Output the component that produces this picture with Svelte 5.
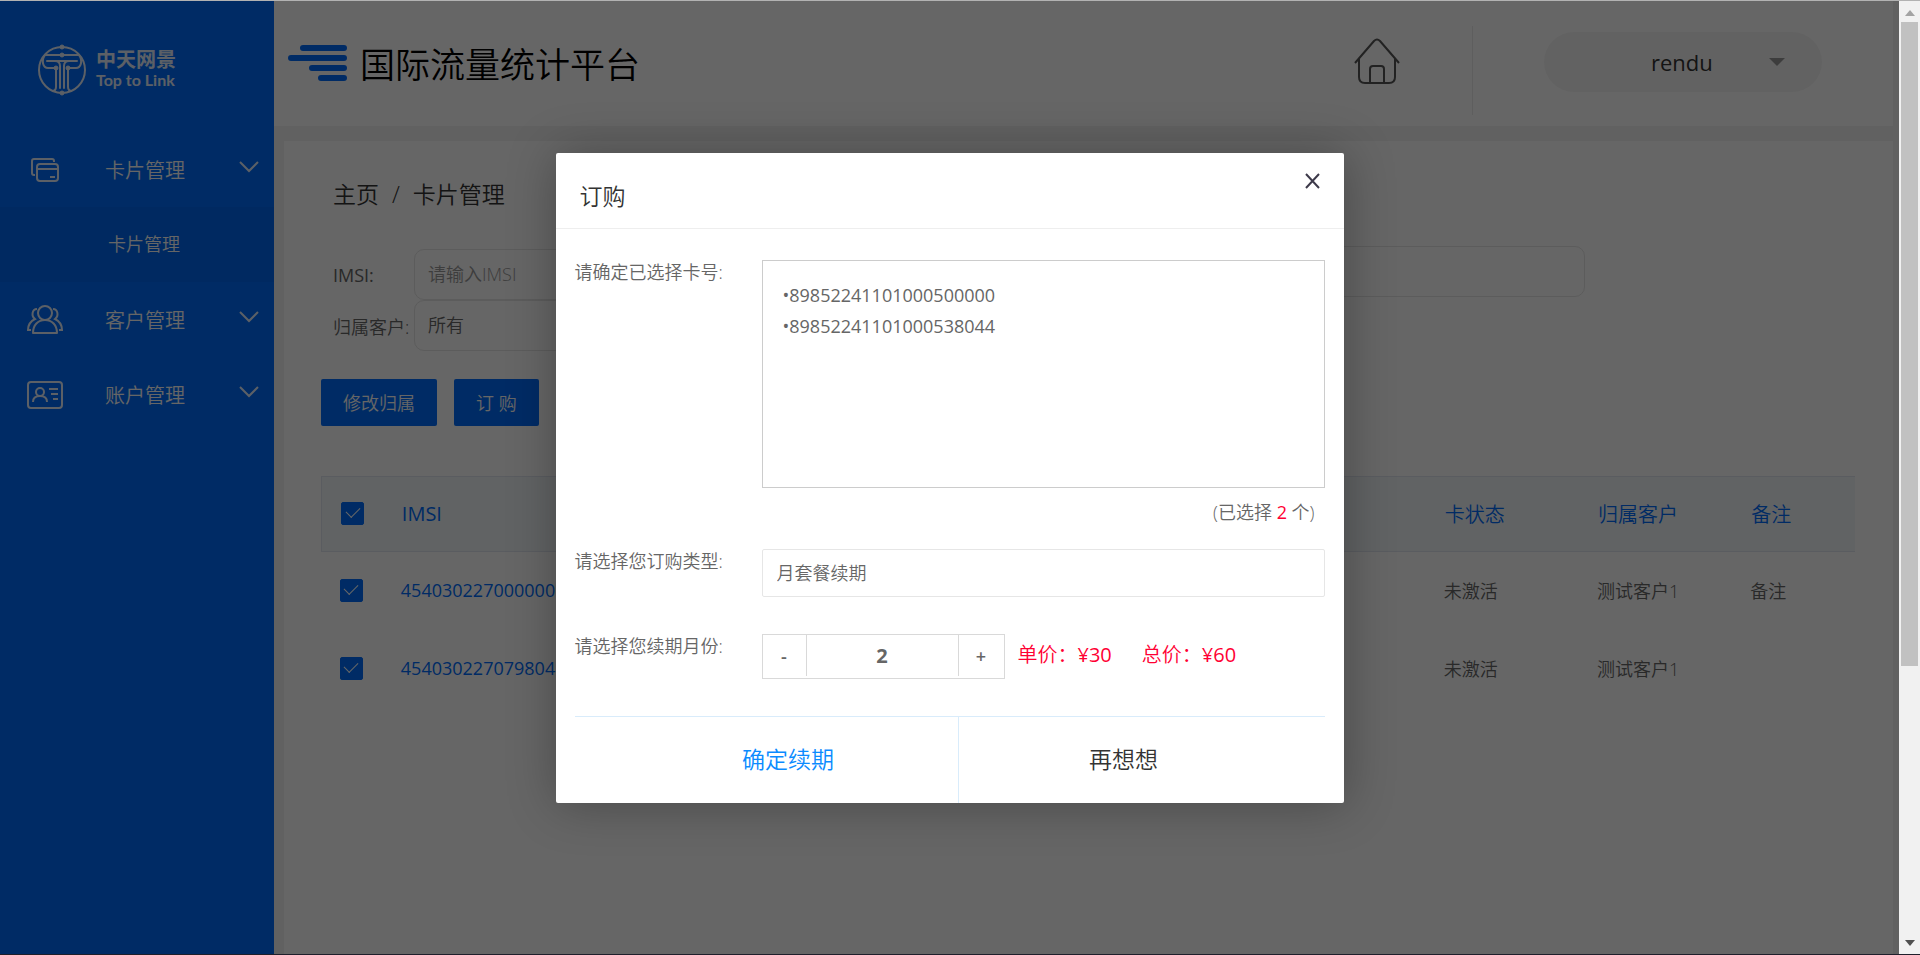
<script lang="ts">
  type Row = { imsi: string; status: string; owner: string; remark: string; checked: boolean }

  let rows = $state<Row[]>([
    { imsi: '454030227000000', status: '未激活', owner: '测试客户1', remark: '备注', checked: true },
    { imsi: '454030227079804', status: '未激活', owner: '测试客户1', remark: '', checked: true },
  ])
  const cards = ['89852241101000500000', '89852241101000538044']
  const unitPrice = 30

  let open = $state(true)
  let months = $state(2)
  let total = $derived(months * unitPrice)
  let allChecked = $derived(rows.every((r) => r.checked))

  function toggleAll() {
    const next = !allChecked
    rows.forEach((r) => (r.checked = next))
  }

  function step(n: number) {
    months = Math.max(1, months + n)
  }
</script>

{#snippet chevron()}
  <svg class="chevron" width="20" height="12" viewBox="0 0 20 12">
    <path d="M1 1l9 9 9-9" fill="none" stroke="currentColor" stroke-width="2" />
  </svg>
{/snippet}

<div class="app">
  <div class="view">
    <nav class="sidebar">
      <div class="logo">
        <svg width="50" height="52" viewBox="0 0 50 52" fill="none" stroke="currentColor" stroke-width="2">
          <circle cx="25" cy="26" r="23" />
          <circle cx="25" cy="3" r="2" fill="currentColor" stroke-width="1" />
          <circle cx="25" cy="49" r="2" fill="currentColor" stroke-width="1" />
          <circle cx="25" cy="11" r="2" fill="currentColor" stroke-width="1" />
          <path d="M8 11h34" />
          <path d="M8 11c-4 6-2 13 3 13h8v19q0 4-4 4" />
          <path d="M42 11c4 6 2 13-3 13h-8v19q0 4 4 4" />
          <path d="M10 17h8q5 0 5 5v22M40 17h-8q-5 0-5 5v22" stroke-linecap="round" />
          <path d="M18 17h14" />
          <circle cx="19" cy="24" r="2" fill="currentColor" stroke-width="1" />
          <circle cx="31" cy="24" r="2" fill="currentColor" stroke-width="1" />
        </svg>
        <div class="brand">
          <strong>中天网景</strong>
          <span>Top to Link</span>
        </div>
      </div>

      <button class="item">
        <svg width="36" height="30" viewBox="0 0 36 30" fill="none" stroke="currentColor" stroke-width="2">
          <path d="M8 20H7a2 2 0 0 1-2-2V6a2 2 0 0 1 2-2h18a2 2 0 0 1 2 2v1" />
          <rect x="10" y="9" width="21" height="17" rx="3" />
          <path d="M10 14h21M23 22h5" />
        </svg>
        <span>卡片管理</span>
        {@render chevron()}
      </button>
      <a class="sub" href="#cards">卡片管理</a>
      <button class="item">
        <svg width="36" height="30" viewBox="0 0 36 30" fill="none" stroke="currentColor" stroke-width="2">
          <circle cx="18" cy="8" r="7" />
          <path d="M6 28c0-8 5-13 12-13s12 5 12 13z" stroke-linejoin="round" />
          <path d="M10 4c-5 0-6 7-2 10-4 2-7 6-7 11h3M26 4c5 0 6 7 2 10 4 2 7 6 7 11h-3" />
        </svg>
        <span>客户管理</span>
        {@render chevron()}
      </button>
      <button class="item">
        <svg width="36" height="30" viewBox="0 0 36 30" fill="none" stroke="currentColor" stroke-width="2">
          <rect x="1" y="2" width="34" height="26" rx="3" />
          <circle cx="13" cy="12" r="4" />
          <path d="M6 22c0-4 3-6 7-6s7 2 7 6M22 9h9M24 14h7M26 19h5" />
        </svg>
        <span>账户管理</span>
        {@render chevron()}
      </button>
    </nav>

    <div class="main">
      <header class="top">
        <svg class="stripes" width="60" height="38" viewBox="0 0 60 38" stroke="currentColor" stroke-width="6" stroke-linecap="round">
          <path d="M15 4h41M3 14h53M24 24h32M33 34h23" />
        </svg>
        <h1>国际流量统计平台</h1>
        <a class="home" href="#home" aria-label="主页">
          <svg width="46" height="46" viewBox="0 0 46 46" fill="none" stroke="currentColor" stroke-width="2">
            <path d="M1 25L20 3q3-3 6 0l19 22" />
            <path d="M5 21v18q0 6 6 6h24q6 0 6-6V21" />
            <path d="M16 45V31q0-3 3-3h8q3 0 3 3v14" />
          </svg>
        </a>
        <div class="account">
          <button class="user">
            <span>rendu</span>
            <svg width="16" height="8" viewBox="0 0 16 8"><path d="M0 0h16l-8 8z" fill="#999" /></svg>
          </button>
        </div>
      </header>

      <section class="panel">
        <div class="crumbs"><a href="#home">主页</a><span>/</span><a href="#cards">卡片管理</a></div>

        <form class="filters">
          <div class="fields">
            <label class="latin" for="imsi">IMSI:</label>
            <input id="imsi" placeholder="请输入IMSI" />
            <label for="owner">归属客户:</label>
            <select id="owner"><option>所有</option></select>
          </div>
          <input class="keyword" aria-label="ICCID" />
        </form>

        <div class="actions">
          <button>修改归属</button>
          <button onclick={() => (open = true)}>订 购</button>
        </div>

        <table>
          <thead>
            <tr>
              <th class="pick"><input type="checkbox" aria-label="全选" checked={allChecked} onchange={toggleAll} /></th>
              <th class="latin">IMSI</th>
              <th class="tenth">卡状态</th>
              <th class="tenth">归属客户</th>
              <th class="last">备注</th>
            </tr>
          </thead>
          <tbody>
            {#each rows as row (row.imsi)}
              <tr>
                <td class="pick"><input type="checkbox" aria-label={row.imsi} bind:checked={row.checked} /></td>
                <td class="latin"><a href="#card">{row.imsi}</a></td>
                <td>{row.status}</td>
                <td>{row.owner}</td>
                <td>{row.remark}</td>
              </tr>
            {/each}
          </tbody>
        </table>
      </section>
    </div>

    {#if open}
      <div class="shade">
        <div class="modal" role="dialog" aria-modal="true" aria-labelledby="modal-title">
          <div class="modal-head">
            <h2 id="modal-title">订购</h2>
            <button class="close" aria-label="关闭" onclick={() => (open = false)}>
              <svg width="15" height="16" viewBox="0 0 15 16"><path d="M1 1l13 14M14 1L1 15" stroke="currentColor" stroke-width="2" /></svg>
            </button>
          </div>
          <div class="modal-body">
            <div class="line">
              <span class="caption">请确定已选择卡号:</span>
              <div class="field">
                <ul>
                  {#each cards as card}
                    <li>•{card}</li>
                  {/each}
                </ul>
                <p class="count">(已选择 <em>{cards.length}</em> 个)</p>
              </div>
            </div>
            <div class="line">
              <label class="caption" for="kind">请选择您订购类型:</label>
              <select id="kind" class="field"><option>月套餐续期</option></select>
            </div>
            <div class="line">
              <label class="caption" for="months">请选择您续期月份:</label>
              <div class="field months">
                <div class="stepper">
                  <button onclick={() => step(-1)}>-</button>
                  <input id="months" bind:value={months} />
                  <button onclick={() => step(1)}>+</button>
                </div>
                <span class="price">单价：<b>¥{unitPrice}</b></span>
                <span class="price">总价：<b>¥{total}</b></span>
              </div>
            </div>
            <div class="modal-foot">
              <button class="ok">确定续期</button>
              <button class="cancel" onclick={() => (open = false)}>再想想</button>
            </div>
          </div>
        </div>
      </div>
    {/if}
  </div>

  <div class="scrollbar" aria-hidden="true">
    <svg width="10" height="6" viewBox="0 0 10 6"><path d="M0 6h10L5 0z" fill="#a3a3a3" /></svg>
    <div class="track"><div class="thumb"></div></div>
    <svg width="10" height="6" viewBox="0 0 10 6"><path d="M0 0h10L5 6z" fill="#505050" /></svg>
  </div>
</div>

<style>
  :global(body) {
    font-family: 'Open Sans', 'Noto Sans CJK SC', sans-serif;
    font-size: 18px;
    font-weight: 350;
    color: #666;
  }
  * {
    box-sizing: border-box;
  }
  button,
  input,
  select {
    font: inherit;
    color: inherit;
    margin: 0;
    padding: 0;
    border: 0;
    background: none;
    appearance: none;
    outline: none;
  }
  a {
    color: inherit;
    text-decoration: none;
  }
  .app {
    display: flex;
    min-height: 100vh;
    border-top: 1px solid #b2b2b2;
    border-bottom: 1px solid #1f1f2b;
  }
  .view {
    position: relative;
    display: flex;
    flex: 1;
    min-width: 0;
    background: #f3f3f3;
  }

  .sidebar {
    flex: 0 0 274px;
    background: #006dfc;
    color: #fff;
  }
  .logo {
    display: flex;
    gap: 9px;
    height: 131px;
    padding: 43px 0 0 37px;
  }
  .brand {
    display: flex;
    flex-direction: column;
    padding-top: 6px;
  }
  .brand strong {
    font-size: 20px;
    line-height: 20px;
    font-weight: 700;
  }
  .brand span {
    font: 700 16px/20px Lato, sans-serif;
  }
  .logo,
  .item svg {
    opacity: 0.9;
  }
  .item {
    display: flex;
    align-items: center;
    width: 100%;
    height: 75px;
    padding: 0 15px 0 27px;
    font-size: 20px;
  }
  .item span {
    margin: 0 auto 0 42px;
  }
  .chevron {
    margin-bottom: 6px;
  }
  .sub {
    display: block;
    padding-left: 108px;
    line-height: 75px;
    background: #0068f2;
  }

  .main {
    display: flex;
    flex: 1;
    flex-direction: column;
    gap: 15px;
    min-width: 0;
    padding-right: 6px;
  }
  .top {
    display: flex;
    align-items: center;
    height: 125px;
    padding: 0 71px 2px 14px;
    background: #fff;
  }
  .stripes {
    color: #006dfc;
  }
  h1 {
    margin: 0 auto 0 12px;
    font-size: 35px;
    font-weight: 350;
    color: #000;
  }
  .home {
    display: flex;
    margin: 0 72px 4px 0;
    color: #555;
  }
  .account {
    height: 89px;
    margin-top: 16px;
    padding: 6px 0 0 71px;
    border-left: 1px solid #eaeaea;
  }
  .user {
    display: flex;
    align-items: center;
    width: 278px;
    height: 60px;
    padding: 0 37px 0 107px;
    border-radius: 30px;
    background: #f6f6f6;
    font-size: 22px;
    font-weight: 400;
    color: #333;
  }
  .user span {
    margin-right: auto;
  }

  .panel {
    flex: 1;
    margin-left: 10px;
    padding: 35px 38px 0 37px;
    background: #fff;
  }
  .crumbs {
    display: flex;
    gap: 13px;
    padding-left: 12px;
    font-size: 23px;
    line-height: 36px;
    color: #333;
  }
  .filters {
    display: flex;
    justify-content: space-between;
    align-items: flex-start;
    margin-top: 34px;
    padding-left: 12px;
  }
  .fields {
    display: grid;
    grid-template-columns: 81px 400px;
    align-items: center;
    padding-top: 3px;
  }
  .fields input,
  .fields select,
  .keyword {
    height: 51px;
    padding: 0 13px 2px;
    border: 1px solid #e6e6e6;
    border-radius: 10px;
  }
  .fields label {
    white-space: nowrap;
  }
  .fields input::placeholder {
    color: #999;
    opacity: 1;
  }
  .keyword {
    width: 400px;
    margin-right: 270px;
  }
  .actions {
    display: flex;
    gap: 17px;
    margin: 28px 0 50px;
  }
  .actions button {
    height: 47px;
    padding: 0 22px 2px;
    border-radius: 2px;
    background: #006dfc;
    color: #fff;
  }

  table {
    width: 100%;
    table-layout: fixed;
    border-collapse: collapse;
  }
  thead {
    background: #f3f7fb;
    border: 1px solid #e0e6f0;
    border-right: 0;
  }
  th {
    height: 75px;
    padding: 0 0 1px 19px;
    text-align: left;
    font-size: 20px;
    font-weight: 350;
    color: #006dfc;
  }
  td {
    height: 78px;
    padding: 0 0 1px 18px;
  }
  td a {
    color: #006dfc;
  }
  .latin {
    font-weight: 400;
  }
  .pick {
    width: 4%;
  }
  .tenth {
    width: 10%;
  }
  .last {
    width: 8%;
  }
  input[type='checkbox'] {
    display: grid;
    place-items: center;
    width: 23px;
    height: 23px;
    border: 1px solid #006dfc;
    border-radius: 2px;
  }
  input[type='checkbox']:checked {
    background: #006dfc;
  }
  input[type='checkbox']:checked::before {
    content: '';
    width: 7px;
    height: 12px;
    margin-bottom: 6px;
    border: solid #fff;
    border-width: 0 1px 1px 0;
    transform: rotate(45deg);
  }

  .shade {
    position: absolute;
    inset: 0;
    display: flex;
    align-items: center;
    justify-content: center;
    background: rgba(0, 0, 0, 0.6);
  }
  .modal {
    width: 788px;
    border-radius: 2px;
    background: #fff;
    box-shadow: 1px 1px 50px rgba(0, 0, 0, 0.3);
  }
  .modal-head {
    display: flex;
    justify-content: space-between;
    align-items: flex-start;
    height: 76px;
    padding: 20px 24px 0;
    border-bottom: 1px solid #eee;
  }
  h2 {
    margin: 0;
    font-size: 23px;
    line-height: 46px;
    font-weight: 350;
    color: #333;
  }
  .close {
    display: flex;
    color: #3d3a4a;
  }
  .modal-body {
    padding: 31px 19px 0;
  }
  .line {
    display: flex;
  }
  .caption {
    flex: 0 0 187px;
    line-height: 24px;
  }
  .field {
    flex: 1;
  }
  ul {
    height: 228px;
    margin: 0;
    padding: 19px 20px;
    border: 1px solid #ccc;
    list-style: none;
    line-height: 31px;
    font-weight: 400;
  }
  .count {
    margin: 0;
    padding: 11px 10px 23px 0;
    line-height: 27px;
    text-align: right;
  }
  em {
    font-style: normal;
    font-weight: 400;
    color: #f03;
  }
  select.field {
    height: 48px;
    margin-bottom: 37px;
    padding: 0 14px;
    border: 1px solid #e6e6e6;
    border-radius: 2px;
  }
  .months {
    display: flex;
    align-items: flex-start;
  }
  .stepper {
    display: flex;
    width: 243px;
    height: 45px;
    margin-right: 13px;
    border: 1px solid #d9d9d9;
    font-weight: 600;
  }
  .stepper button {
    flex: 0 0 43px;
    font-weight: 600;
  }
  .stepper button:last-child {
    flex-basis: 45px;
  }
  .stepper input {
    flex: 1;
    min-width: 0;
    height: 41px;
    border: solid #d9d9d9;
    border-width: 0 1px;
    font-size: 20px;
    font-weight: 700;
    text-align: center;
  }
  .price {
    margin-right: 30px;
    font-size: 20px;
    line-height: 42px;
    color: #f03;
  }
  .price b {
    font-weight: 400;
  }
  .modal-foot {
    display: flex;
    margin-top: 37px;
    border-top: 1px solid #d9ecfb;
  }
  .modal-foot button {
    height: 86px;
    padding-bottom: 3px;
    font-size: 23px;
  }
  .modal-foot .ok {
    flex: 0 0 384px;
    padding-left: 44px;
    border-right: 1px solid #d9ecfb;
    color: #0b8bff;
  }
  .modal-foot .cancel {
    flex: 1;
    padding-right: 36px;
    color: #333;
  }

  .scrollbar {
    display: flex;
    flex: 0 0 21px;
    flex-direction: column;
    align-items: center;
    gap: 6px;
    padding: 9px 0 8px;
    background: #f1f1f1;
  }
  .track {
    flex: 1;
    width: 17px;
  }
  .thumb {
    height: 70.6%;
    background: #c1c1c1;
  }
</style>
